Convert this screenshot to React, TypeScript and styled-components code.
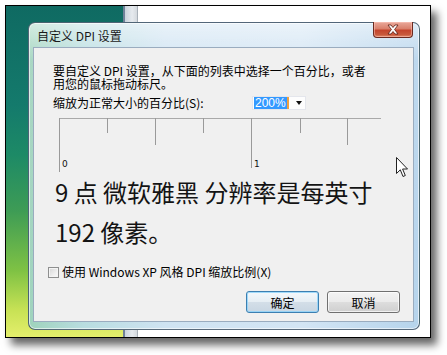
import * as React from 'react';
import styled, { createGlobalStyle } from 'styled-components';

const GlobalStyle = createGlobalStyle`
    html, body {
        margin: 0;
        padding: 0;
        background: #ffffff;
    }
    body {
        font-family: "Noto Sans CJK SC", "Noto Sans", sans-serif;
        font-size: 12px;
        color: #000;
    }
`;

const Stage = styled.div`
    position: relative;
    width: 447px;
    height: 355px;
    overflow: hidden;
    background: #ffffff;
`;

const ShotFrame = styled.div`
    position: relative;
    margin: 5px 0 0 5px;
    width: 424px;
    height: 331px;
    border: 1px solid #000;
    box-shadow: 6px 7px 8px rgba(0, 0, 0, 0.6);
    overflow: hidden;
    background: linear-gradient(
        180deg,
        #0f6a62 0%,
        #147a6c 30%,
        #1d8a66 45%,
        #3e9c55 62%,
        #7fc244 80%,
        #c8e255 92%,
        #e4ef6c 100%
    );
`;

const BehindWindow = styled.div`
    position: absolute;
    left: 117px;
    top: -1px;
    right: -1px;
    bottom: -1px;
    display: flex;
    background: #ffffff;
`;

const BehindEdge = styled.div`
    width: 12px;
    flex: 0 0 12px;
    border-left: 2px solid #6f8198;
    border-right: 1px solid #a8b0b8;
    background: linear-gradient(90deg, #c9d3dc 0%, #e6eaee 60%, #d4d9de 100%);
`;

const Dialog = styled.div`
    position: absolute;
    left: 22px;
    top: 16px;
    width: 390px;
    height: 306px;
    display: flex;
    flex-direction: column;
    border: 1px solid rgba(40, 60, 80, 0.75);
    border-radius: 7px;
    background:
        linear-gradient(180deg, rgba(255, 255, 255, 0.55) 0%, rgba(255, 255, 255, 0.1) 12%, rgba(255, 255, 255, 0) 100%),
        linear-gradient(90deg, #9fd3bc 0%, #b8dde0 14%, #cfe3f2 35%, #d3e5f4 70%, #b6d4ec 100%);
    box-shadow: inset 0 0 0 1px rgba(255, 255, 255, 0.6);
`;

const TitleBar = styled.div`
    height: 24px;
    flex: 0 0 24px;
    display: flex;
    align-items: center;
    padding-left: 8px;
`;

const TitleText = styled.span`
    font-size: 12px;
    line-height: 14px;
    color: #1a1a1a;
    margin-top: 1px;
`;

const CloseButton = styled.div`
    position: absolute;
    top: -1px;
    right: 6px;
    width: 40px;
    height: 16px;
    box-sizing: border-box;
    display: flex;
    align-items: center;
    justify-content: center;
    border: 1px solid #6b2a20;
    border-top: none;
    border-radius: 0 0 4px 4px;
    background: linear-gradient(180deg, #e9a99b 0%, #d9806c 45%, #c4442c 55%, #c85a3c 85%, #e49070 100%);
    box-shadow: inset 0 0 0 1px rgba(255, 200, 190, 0.5);
`;

const Client = styled.div`
    flex: 1 1 auto;
    margin: 0 5px 7px 4px;
    border: 1px solid #9aacbf;
    background: #f0f0f0;
    padding: 16px 13px 0 19px;
    display: flex;
    flex-direction: column;
`;

const Intro = styled.p`
    margin: 0;
    font-size: 12px;
    line-height: 13px;
    white-space: nowrap;
`;

const ScaleRow = styled.div`
    margin-top: 6px;
    height: 14px;
    display: flex;
    align-items: center;
`;

const ScaleLabel = styled.span`
    width: 199px;
    flex: 0 0 199px;
    font-size: 12px;
    line-height: 14px;
`;

const Combo = styled.div`
    width: 54px;
    height: 14px;
    box-sizing: border-box;
    display: flex;
    align-items: center;
    border: 1px solid #e4e6ec;
    background: #fdfdfd;
    padding-left: 1px;
`;

const ComboValue = styled.span`
    font-family: "Liberation Sans", Arial, sans-serif;
    font-size: 12px;
    line-height: 12px;
    background: #3399ff;
    color: #fff;
    padding: 0 1px;
    border-right: 2px solid #f0a040;
`;

const ComboArrow = styled.span`
    margin-left: auto;
    margin-right: 3px;
    width: 0;
    height: 0;
    border-left: 3px solid transparent;
    border-right: 3px solid transparent;
    border-top: 4px solid #111;
`;

const RulerBox = styled.div`
    margin: 8px 0 0 6px;
    height: 54px;
    width: 322px;
`;

const BigText = styled.div`
    margin-left: 2px;
    font-family: "Noto Sans CJK SC", sans-serif;
    font-size: 24px;
    line-height: 40px;
    color: #141414;
    white-space: nowrap;
`;

const CheckRow = styled.label`
    margin: 13px 0 0 -5px;
    height: 14px;
    display: flex;
    align-items: center;
    gap: 3px;
    font-size: 12px;
    line-height: 14px;
`;

const CheckBox = styled.span`
    width: 11px;
    height: 11px;
    box-sizing: border-box;
    border: 1px solid #8e8f8f;
    background: linear-gradient(135deg, #d6d6d6 0%, #eeeeee 60%, #fbfbfb 100%);
    box-shadow: inset 0 0 0 1px #f4f4f4;
`;

const ButtonRow = styled.div`
    margin-top: 12px;
    display: flex;
    justify-content: flex-end;
    gap: 8px;
`;

const DialogButton = styled.div<{ $primary?: boolean }>`
    width: 73px;
    height: 22px;
    box-sizing: border-box;
    display: flex;
    align-items: center;
    justify-content: center;
    border-radius: 3px;
    font-size: 12px;
    color: #000;
    border: 1px solid ${p => (p.$primary ? '#3c7fb1' : '#707070')};
    background: ${p =>
        p.$primary
            ? 'linear-gradient(180deg, #f4f8fb 0%, #e6eef4 48%, #d3dee8 52%, #c8d6e2 100%)'
            : 'linear-gradient(180deg, #f3f3f3 0%, #ebebeb 48%, #dddddd 52%, #cfcfcf 100%)'};
    box-shadow: inset 0 0 0 1px ${p => (p.$primary ? 'rgba(140, 210, 250, 0.8)' : 'rgba(255, 255, 255, 0.7)')};
`;

const Pointer = styled.svg`
    position: absolute;
    left: 396px;
    top: 157px;
`;

const ticks = [
    { x: 48, h: 15 },
    { x: 96, h: 27 },
    { x: 144, h: 15 },
    { x: 192, h: 50 },
    { x: 241, h: 15 },
    { x: 288, h: 27 },
];

const Ruler = () => (
    <RulerBox>
        <svg width="322" height="54" viewBox="0 0 322 54">
            <line x1="0" y1="0.5" x2="322" y2="0.5" stroke="#a9a9a9" />
            <line x1="0.5" y1="0" x2="0.5" y2="54" stroke="#9a9a9a" />
            {ticks.map(t => (
                <line key={t.x} x1={t.x + 0.5} y1="0" x2={t.x + 0.5} y2={t.h} stroke="#9a9a9a" />
            ))}
            <text x="3" y="49" fontFamily="'DejaVu Sans', sans-serif" fontSize="9" fill="#111">0</text>
            <text x="195" y="49" fontFamily="'DejaVu Sans', sans-serif" fontSize="9" fill="#111">1</text>
        </svg>
    </RulerBox>
);

const App = () => {
    return (
        <Stage>
            <GlobalStyle />
            <ShotFrame>
                <BehindWindow>
                    <BehindEdge />
                </BehindWindow>
                <Dialog>
                    <TitleBar>
                        <TitleText>自定义 DPI 设置</TitleText>
                    </TitleBar>
                    <CloseButton>
                        <svg width="14" height="11" viewBox="0 0 14 11">
                            <path
                                d="M2 1 L5 1 L7 3.5 L9 1 L12 1 L8.6 5.5 L12 10 L9 10 L7 7.5 L5 10 L2 10 L5.4 5.5 Z"
                                fill="#ffffff"
                                stroke="#5a1a10"
                                strokeWidth="0.8"
                                strokeLinejoin="round"
                            />
                        </svg>
                    </CloseButton>
                    <Client>
                        <Intro>
                            要自定义 DPI 设置，从下面的列表中选择一个百分比，或者
                            <br />
                            用您的鼠标拖动标尺。
                        </Intro>
                        <ScaleRow>
                            <ScaleLabel>缩放为正常大小的百分比(S):</ScaleLabel>
                            <Combo>
                                <ComboValue>200%</ComboValue>
                                <ComboArrow />
                            </Combo>
                        </ScaleRow>
                        <Ruler />
                        <BigText>
                            9 点 微软雅黑 分辨率是每英寸
                            <br />
                            192 像素。
                        </BigText>
                        <CheckRow>
                            <CheckBox />
                            <span>使用 Windows XP 风格 DPI 缩放比例(X)</span>
                        </CheckRow>
                        <ButtonRow>
                            <DialogButton $primary>确定</DialogButton>
                            <DialogButton>取消</DialogButton>
                        </ButtonRow>
                    </Client>
                </Dialog>
            </ShotFrame>
            <Pointer width="13" height="21" viewBox="0 0 13 21">
                <path
                    d="M0.5 0.5 L0.5 16.5 L4.3 12.8 L7 19.5 L9.3 18.5 L6.6 12 L11.5 12 Z"
                    fill="#ffffff"
                    stroke="#222"
                    strokeWidth="1"
                    strokeLinejoin="miter"
                />
            </Pointer>
        </Stage>
    );
};

export default App;
